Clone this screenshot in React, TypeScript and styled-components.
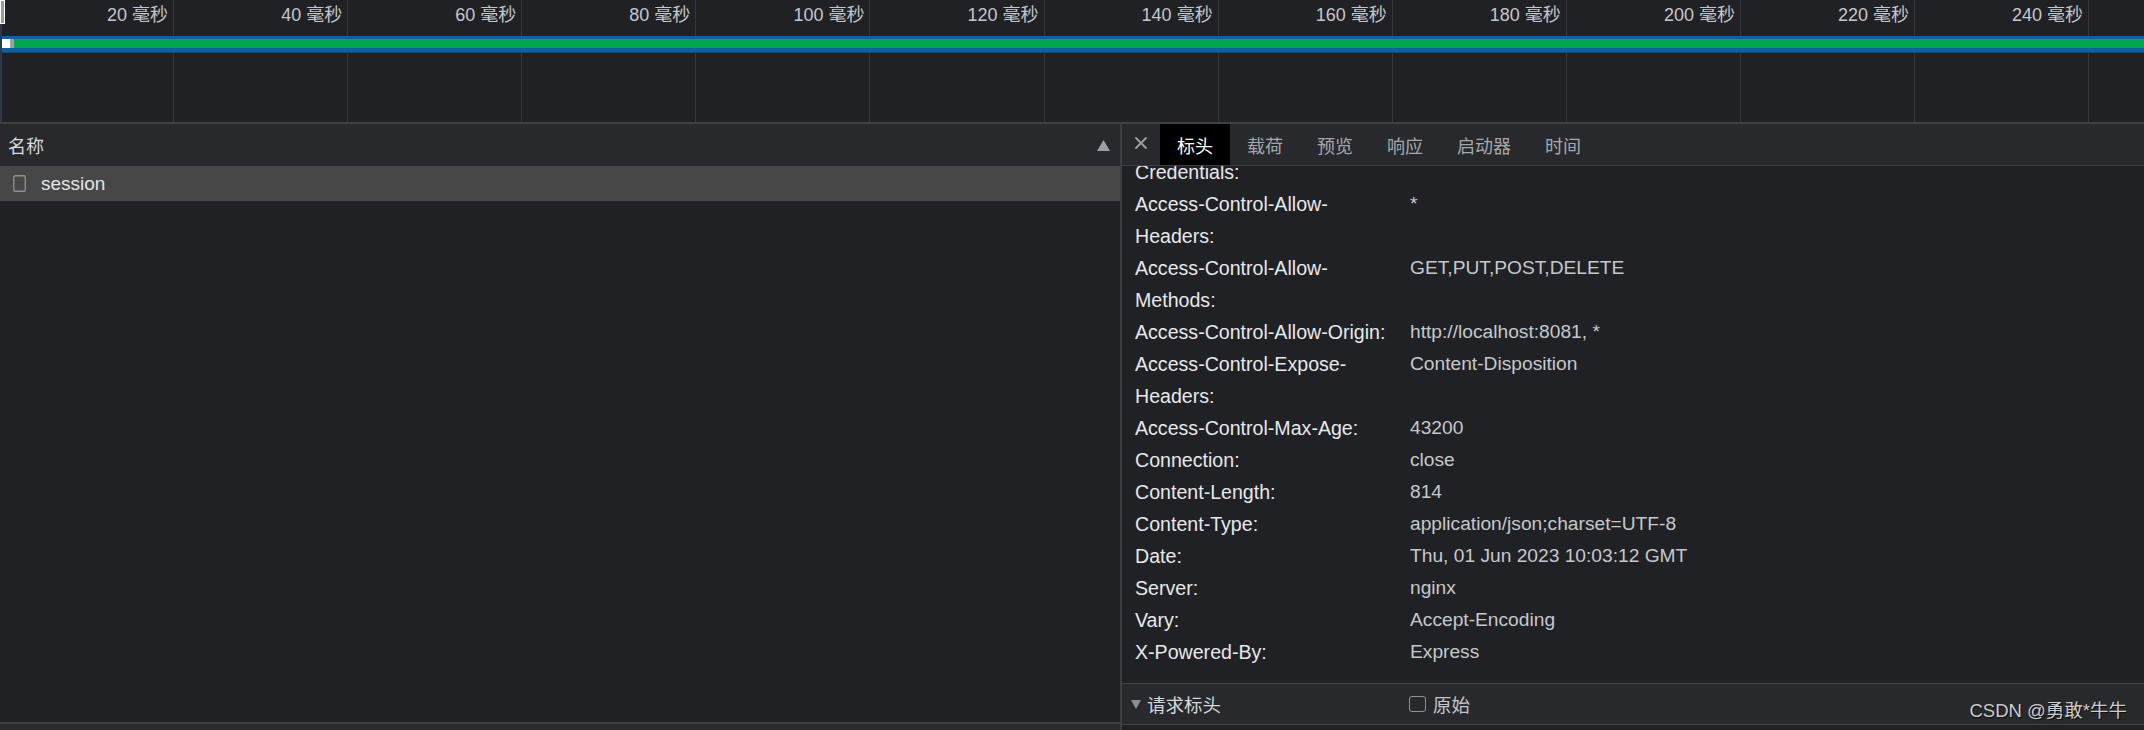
import React, { useLayoutEffect, useRef } from "react";
import styled, { createGlobalStyle } from "styled-components";

const FONT = `"Liberation Sans", "Noto Sans CJK SC", sans-serif`;

const GlobalStyle = createGlobalStyle`
  html, body { margin: 0; padding: 0; background: #202124; overflow: hidden; }
  body { font-family: ${FONT}; }
  #root { width: 2144px; height: 730px; }
`;

const Screen = styled.div`
  position: relative;
  width: 2144px;
  height: 730px;
  display: flex;
  flex-direction: column;
  overflow: hidden;
  background: #202124;
  color: #e8eaed;
  font-family: ${FONT};
`;

/* ---------- overview timeline ---------- */
const Overview = styled.div`
  position: relative;
  flex: 0 0 122px;
  border-bottom: 2px solid #404145;
  background: #202124;
`;

const Grid = styled.div`
  display: flex;
  height: 100%;
`;

const GridCell = styled.div`
  flex: 0 0 174.1px;
  box-sizing: border-box;
  height: 100%;
  border-right: 1px solid #36373b;
  display: flex;
  justify-content: flex-end;
  align-items: flex-start;
  padding: 5px 5px 0 0;
`;

const TickLabel = styled.span`
  font-size: 18px;
  line-height: 20px;
  color: #c3c6cb;
  white-space: nowrap;
`;

const Bar = styled.div`
  position: absolute;
  top: 36px;
  left: 0;
  right: 0;
  height: 17px;
  box-sizing: border-box;
  padding-top: 3px;
  background: #11609b;
  border-bottom: 1px solid #0d4c7c;
  display: flex;
  align-items: flex-start;
`;

const Segment = styled.div<{ $color: string; $w?: number }>`
  height: 9px;
  background: ${(p) => p.$color};
  ${(p) => (p.$w ? `flex: 0 0 ${p.$w}px;` : `flex: 1;`)}
`;

const Handle = styled.div`
  position: absolute;
  top: 0;
  left: 0;
  width: 5px;
  height: 24px;
  box-sizing: border-box;
  border: 1px solid #ffffff;
  background: #9c9c9c;
`;

const EdgeLine = styled.div`
  position: absolute;
  top: 24px;
  bottom: 0;
  left: 0;
  width: 2px;
  background: #28394c;
`;

/* ---------- panels ---------- */
const Split = styled.div`
  flex: 1;
  display: flex;
  min-height: 0;
`;

const LeftPanel = styled.div`
  flex: 0 0 1120px;
  display: flex;
  flex-direction: column;
  border-right: 2px solid #3d3e42;
`;

const ColumnHeader = styled.div`
  flex: 0 0 42px;
  display: flex;
  align-items: center;
  justify-content: space-between;
  padding: 0 10px 0 8px;
  background: #28292c;
  font-size: 18px;
  color: #d8dadd;
`;

const RequestList = styled.div`
  flex: 1;
  background: #202124;
  border-bottom: 2px solid #3d3e42;
`;

const RequestRow = styled.div`
  height: 35px;
  display: flex;
  align-items: center;
  gap: 15px;
  padding-left: 13px;
  background: #474747;
  font-size: 19px;
  color: #e3e5e8;
`;

const StatusBar = styled.div`
  flex: 0 0 6px;
  background: #292a2d;
`;

const RightPanel = styled.div`
  flex: 1;
  min-width: 0;
  display: flex;
  flex-direction: column;
`;

const TabBar = styled.div`
  flex: 0 0 41px;
  display: flex;
  align-items: stretch;
  background: #28292c;
  border-bottom: 1px solid #3c3d41;
`;

const CloseButton = styled.div`
  flex: 0 0 38px;
  display: flex;
  align-items: center;
  justify-content: center;
  padding-bottom: 3px;
  box-sizing: border-box;
`;

const Tab = styled.div<{ $active?: boolean }>`
  display: flex;
  align-items: center;
  padding: 0 17px;
  font-size: 18px;
  color: ${(p) => (p.$active ? "#ffffff" : "#a4a8ad")};
  background: ${(p) => (p.$active ? "#000000" : "transparent")};
`;

const Scroll = styled.div`
  position: relative;
  flex: 1;
  overflow: hidden;
  background: #202124;
`;

const SectionHeader = styled.div`
  height: 40px;
  display: flex;
  align-items: center;
  padding-left: 9px;
  background: #28292c;
  border-top: 1px solid #45464a;
  border-bottom: 1px solid #45464a;
`;

const SectionTitle = styled.div`
  flex: 0 0 278px;
  display: flex;
  align-items: center;
  gap: 6px;
  font-size: 18.5px;
  color: #d6d8db;
`;

const RawToggle = styled.label`
  display: flex;
  align-items: center;
  gap: 7px;
  font-size: 18.5px;
  color: #c4c7cb;
`;

const Checkbox = styled.span`
  width: 17px;
  height: 16px;
  box-sizing: border-box;
  border: 1.5px solid #8f9399;
  border-radius: 3px;
`;

const HeaderList = styled.div`
  padding: 0 0 15px 13px;
`;

const HeaderRow = styled.div`
  display: grid;
  grid-template-columns: 258px 1fr;
  column-gap: 17px;
  line-height: 32px;
`;

const Key = styled.div`
  font-size: 19.6px;
  color: #e6e8eb;
`;

const Value = styled.div`
  font-size: 19.2px;
  color: #c5c8cc;
  word-break: break-all;
`;

const Watermark = styled.div`
  position: absolute;
  right: 17px;
  bottom: 8px;
  font-size: 18.5px;
  line-height: 22px;
  color: #cbcbcb;
  text-shadow: 1px 1px 1px rgba(0, 0, 0, 0.7);
  white-space: nowrap;
`;

const ticks = [20, 40, 60, 80, 100, 120, 140, 160, 180, 200, 220, 240];

const responseHeaders: [string, string][] = [
  ["Access-Control-Allow-Credentials:", "true"],
  ["Access-Control-Allow-Headers:", "*"],
  ["Access-Control-Allow-Methods:", "GET,PUT,POST,DELETE"],
  ["Access-Control-Allow-Origin:", "http://localhost:8081, *"],
  ["Access-Control-Expose-Headers:", "Content-Disposition"],
  ["Access-Control-Max-Age:", "43200"],
  ["Connection:", "close"],
  ["Content-Length:", "814"],
  ["Content-Type:", "application/json;charset=UTF-8"],
  ["Date:", "Thu, 01 Jun 2023 10:03:12 GMT"],
  ["Server:", "nginx"],
  ["Vary:", "Accept-Encoding"],
  ["X-Powered-By:", "Express"],
];

const requestHeaders: [string, string][] = [
  ["Accept:", "application/json, text/plain, */*"],
  ["Accept-Encoding:", "gzip, deflate, br"],
  ["Accept-Language:", "zh-CN,zh;q=0.9"],
];

const SortArrow = () => (
  <svg width="13" height="11" viewBox="0 0 13 11">
    <polygon points="6.5,0 13,11 0,11" fill="#9aa0a6" />
  </svg>
);

const DocIcon = () => (
  <svg width="13" height="17" viewBox="0 0 13 17">
    <rect x="0.75" y="0.75" width="11.5" height="15.5" rx="1.2" fill="none" stroke="#8e9298" strokeWidth="1.3" />
  </svg>
);

const CloseIcon = () => (
  <svg width="12" height="12" viewBox="0 0 12 12">
    <path d="M1 1 L11 11 M11 1 L1 11" stroke="#9aa0a6" strokeWidth="1.8" strokeLinecap="round" />
  </svg>
);

const Caret = () => (
  <svg width="10" height="9" viewBox="0 0 10 9">
    <polygon points="0,0 10,0 5,9" fill="#8a8d92" />
  </svg>
);

const Section = ({ title }: { title: string }) => (
  <SectionHeader>
    <SectionTitle>
      <Caret />
      <span>{title}</span>
    </SectionTitle>
    <RawToggle>
      <Checkbox />
      <span>原始</span>
    </RawToggle>
  </SectionHeader>
);

export default function App() {
  const scrollRef = useRef<HTMLDivElement>(null);
  const firstRowRef = useRef<HTMLDivElement>(null);

  useLayoutEffect(() => {
    const el = scrollRef.current;
    const row = firstRowRef.current;
    if (el && row) el.scrollTop = row.offsetTop + 42;
  }, []);

  return (
    <Screen>
      <GlobalStyle />
      <Overview>
        <Grid>
          {ticks.map((t) => (
            <GridCell key={t}>
              <TickLabel>{t} 毫秒</TickLabel>
            </GridCell>
          ))}
        </Grid>
        <Bar>
          <Segment $color="#ffffff" $w={10} />
          <Segment $color="#a0a0a0" $w={4} />
          <Segment $color="#00a84f" />
        </Bar>
        <EdgeLine />
        <Handle />
      </Overview>

      <Split>
        <LeftPanel>
          <ColumnHeader>
            <span>名称</span>
            <SortArrow />
          </ColumnHeader>
          <RequestList>
            <RequestRow>
              <DocIcon />
              <span>session</span>
            </RequestRow>
          </RequestList>
          <StatusBar />
        </LeftPanel>

        <RightPanel>
          <TabBar>
            <CloseButton>
              <CloseIcon />
            </CloseButton>
            <Tab $active>标头</Tab>
            <Tab>载荷</Tab>
            <Tab>预览</Tab>
            <Tab>响应</Tab>
            <Tab>启动器</Tab>
            <Tab>时间</Tab>
          </TabBar>
          <Scroll ref={scrollRef}>
            <Section title="响应标头" />
            <HeaderList>
              {responseHeaders.map(([k, v], i) => (
                <HeaderRow key={k} ref={i === 0 ? firstRowRef : undefined}>
                  <Key>{k}</Key>
                  <Value>{v}</Value>
                </HeaderRow>
              ))}
            </HeaderList>
            <Section title="请求标头" />
            <HeaderList>
              {requestHeaders.map(([k, v]) => (
                <HeaderRow key={k}>
                  <Key>{k}</Key>
                  <Value>{v}</Value>
                </HeaderRow>
              ))}
            </HeaderList>
          </Scroll>
        </RightPanel>
      </Split>

      <Watermark>CSDN @勇敢*牛牛</Watermark>
    </Screen>
  );
}
